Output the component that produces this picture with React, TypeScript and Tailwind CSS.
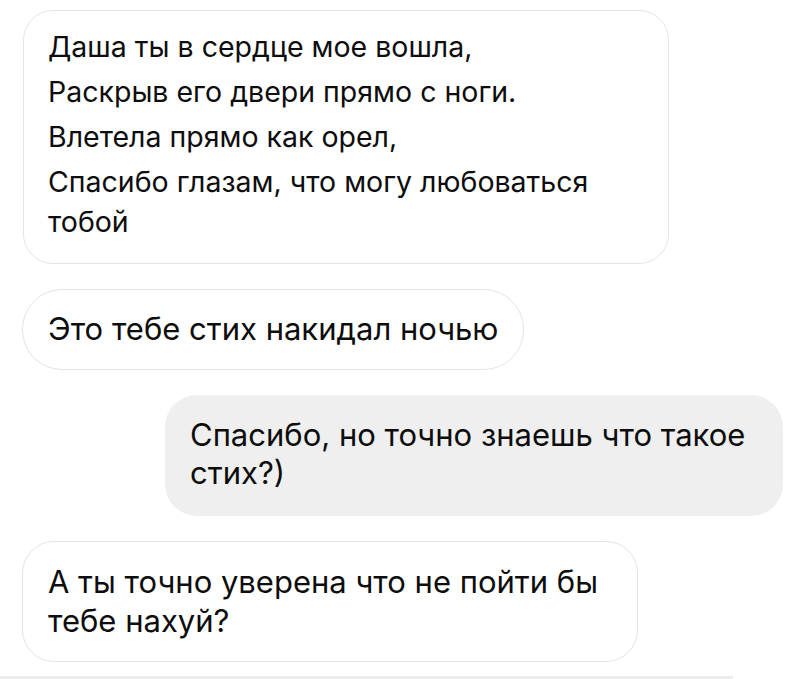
const font = { fontFamily: "Inter, 'Noto Sans', sans-serif" };

function Lines({ lines, className }: { lines: string[]; className: string }) {
  return (
    <>
      {lines.map((l, i) => (
        <div key={i} className={className}>
          {l}
        </div>
      ))}
    </>
  );
}

export default function App() {
  return (
    <div
      className="w-[800px] h-[679px] bg-white overflow-hidden flex flex-col text-[#0d0d0d]"
      style={font}
    >
      <div className="pt-[10px] pl-[23px]">
        <div className="w-[646px] h-[254px] rounded-[30px] border border-[#e4e4e4] pl-[24px] pt-[13px]">
          <Lines
            className="text-[28.5px] leading-[45px] h-[45px]"
            lines={[
              "Даша ты в сердце мое вошла,",
              "Раскрыв его двери прямо с ноги.",
              "Влетела прямо как орел,",
              "Спасибо глазам, что могу любоваться",
            ]}
          />
          <div className="text-[28.5px] leading-[39px] -mt-[2px]">тобой</div>
        </div>
      </div>
      <div className="pt-[25px] pl-[22px]">
        <div className="w-[502px] h-[81px] rounded-[40px] border border-[#e4e4e4] pl-[25px] flex items-center">
          <span className="text-[31px]">Это тебе стих накидал ночью</span>
        </div>
      </div>
      <div className="pt-[25px] pl-[165px]">
        <div className="w-[618px] h-[121px] rounded-[32px] bg-[#efefef] pl-[25px] pt-[21px]">
          <Lines
            className="text-[31px] leading-[38px]"
            lines={["Спасибо, но точно знаешь что такое", "стих?)"]}
          />
        </div>
      </div>
      <div className="pt-[25px] pl-[22px]">
        <div className="w-[616px] h-[121px] rounded-[32px] border border-[#e4e4e4] pl-[25px] pt-[20px]">
          <Lines
            className="text-[31px] leading-[39px]"
            lines={["А ты точно уверена что не пойти бы", "тебе нахуй?"]}
          />
        </div>
      </div>
      <div className="mt-auto h-[3px] w-[733px] bg-[#ededed]" />
    </div>
  );
}
